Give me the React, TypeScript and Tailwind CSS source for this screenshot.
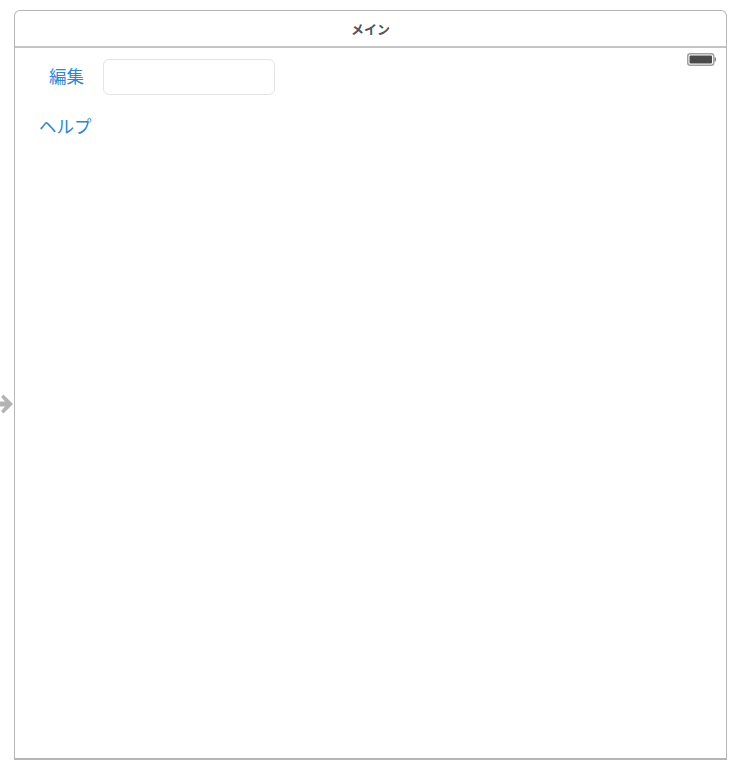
export default function App() {
  const cjk = { fontFamily: '"Noto Sans CJK JP", sans-serif' };
  return (
    <div className="relative w-[738px] h-[767px] bg-white overflow-hidden pt-[10px] pl-[14px]" style={cjk}>
      <svg className="absolute left-0 top-[393px]" width="14" height="22" viewBox="0 0 14 22">
        <path d="M3.5 1.5 L13 11 L3.5 20.5 L1 18 L5 13.5 L0 13.5 L0 8.5 L5 8.5 L1 4 Z" fill="#b4b4b4" />
      </svg>
      <div className="w-[713px] h-[750px] border border-b-2 border-[#b5b5b5] rounded-t-[6px] flex flex-col">
        <div className="h-[37px] shrink-0 border-b-2 border-[#c4c4c4] flex items-center justify-center">
          <span className="text-[13px] font-bold text-[#555555] leading-none">メイン</span>
        </div>
        <div className="relative flex-1 pl-[24px] pt-[11px]">
          <svg className="absolute right-[9px] top-[5px]" width="30" height="13" viewBox="0 0 30 13">
            <rect x="0.75" y="0.75" width="26" height="11.5" rx="2.5" fill="#fff" stroke="#a0a0a0" strokeWidth="1.5" />
            <rect x="2.5" y="2.5" width="22.5" height="8" rx="1" fill="#4a4a4a" />
            <rect x="27.5" y="4.5" width="1.5" height="4" fill="#8a8a8a" />
          </svg>
          <div className="flex items-start">
            <span className="w-[45px] text-right text-[17.5px] leading-[34px] text-[#2f86d6]">編集</span>
            <div className="ml-[19px] w-[172px] h-[36px] rounded-[6px] border border-[#e4e4e4] bg-white" />
          </div>
          <div className="mt-[13px] text-[17.5px] leading-[36px] text-[#2f86d6] w-fit">ヘルプ</div>
        </div>
      </div>
    </div>
  );
}
